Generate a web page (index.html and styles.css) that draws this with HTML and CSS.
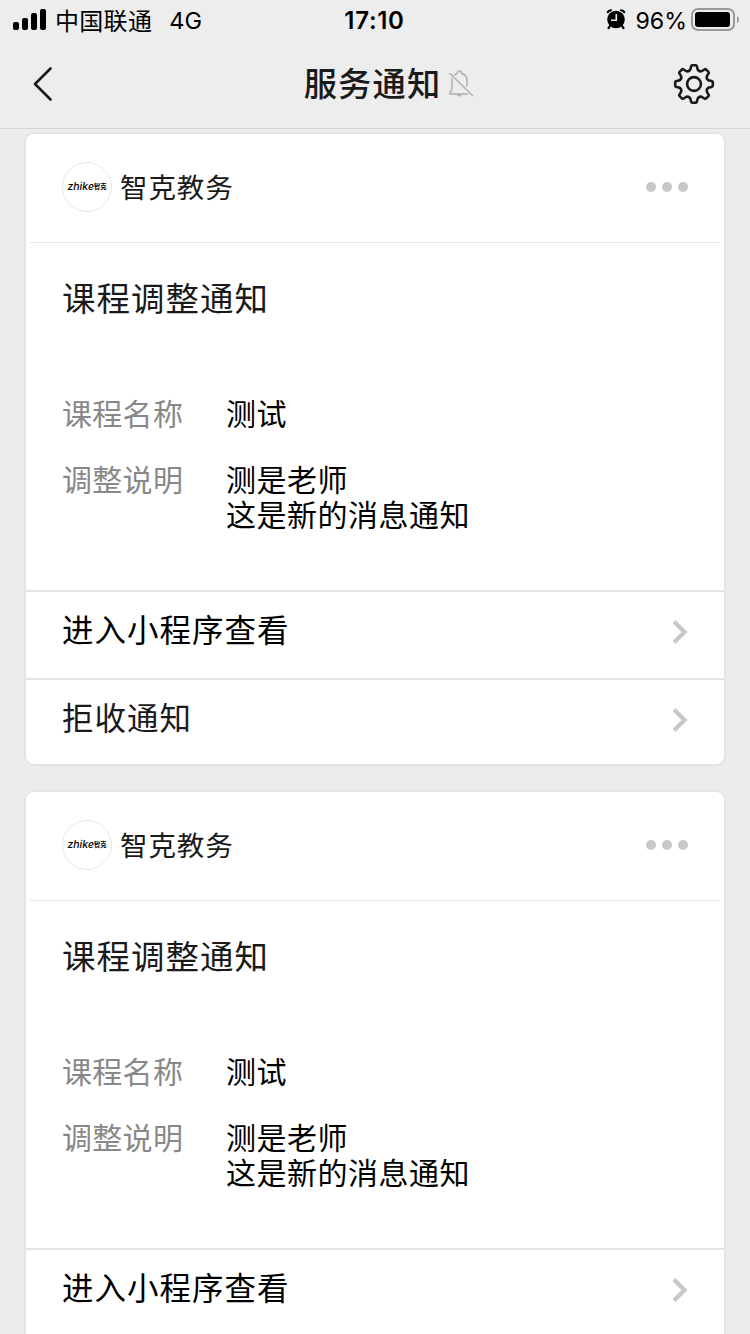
FILE: index.html
```
<!DOCTYPE html>
<html lang="zh-CN">
<head>
    <meta charset="UTF-8">
    <meta name="viewport" content="width=device-width, initial-scale=1.0">
    <title>服务通知</title>
    <link rel="stylesheet" href="styles.css">
</head>
<body>
    <!-- Icônes communes -->
    <svg class="defs" width="0" height="0">
        <defs>
            <path id="tooth" d="M-5.4 -13Q-3.7 -13.6 -3.4 -15.3L-2.9 -17.6Q-2.7 -18.8 -1.6 -18.8H1.6Q2.7 -18.8 2.9 -17.6L3.4 -15.3Q3.7 -13.6 5.4 -13"/>
            <path id="arrow" d="M2 2.5L12.5 13L2 23.5"/>
        </defs>
    </svg>

    <header class="top">
        <div class="status">
            <div class="status-left">
                <svg class="signal" width="34" height="22" viewBox="0 0 34 22">
                    <rect x="0" y="13" width="6" height="8" rx="2"/>
                    <rect x="9" y="9" width="6" height="12" rx="2"/>
                    <rect x="18" y="4" width="6" height="17" rx="2"/>
                    <rect x="27" y="0" width="6" height="21" rx="2"/>
                </svg>
                <span class="carrier">中国联通</span>
                <span class="network">4G</span>
            </div>
            <div class="time">17:10</div>
            <div class="status-right">
                <svg class="alarm" width="20" height="21" viewBox="0 0 20 21">
                    <circle cx="10" cy="10.500" r="8.800"/>
                    <path class="alarm-line" d="M1.800 3.200Q2.500 1.200 5 1.300M18.200 3.200Q17.500 1.200 15 1.300M4 17L2.500 19.200M16 17L17.500 19.200"/>
                    <path class="alarm-hand" d="M10.300 5V11.300H5"/>
                </svg>
                <span class="percent">96%</span>
                <svg class="battery" width="48" height="24" viewBox="0 0 48 24">
                    <rect class="battery-case" x="1" y="1" width="42" height="21" rx="6"/>
                    <rect x="4" y="4" width="35" height="15" rx="3"/>
                    <path class="battery-cap" d="M46 8Q48 9 48 11.5T46 15Z"/>
                </svg>
            </div>
        </div>
        <div class="nav">
            <svg class="back" width="20" height="36" viewBox="0 0 20 36">
                <path d="M17.5 2.5L2 18L17.5 33.5"/>
            </svg>
            <div class="nav-title">
                <h1>服务通知</h1>
                <svg class="mute" width="26" height="28" viewBox="0 0 26 28">
                    <path d="M4 8.500V17.500Q4 20.500 1.800 22.500V24H19.500M9.500 24.500Q11.500 27 13 24.500M6.500 5Q7.500 4 9.300 3.500Q9.500 1 11.500 1T13.700 3.500Q19 5 19 10.500V16M2 3.500L24.500 25.500"/>
                </svg>
            </div>
            <svg class="gear" width="42" height="42" viewBox="-21 -21 42 42">
                <use href="#tooth"/>
                <use href="#tooth" transform="rotate(45)"/>
                <use href="#tooth" transform="rotate(90)"/>
                <use href="#tooth" transform="rotate(135)"/>
                <use href="#tooth" transform="rotate(180)"/>
                <use href="#tooth" transform="rotate(225)"/>
                <use href="#tooth" transform="rotate(270)"/>
                <use href="#tooth" transform="rotate(315)"/>
                <circle r="6.900"/>
            </svg>
        </div>
    </header>

    <main class="list">
        <section class="card">
            <div class="card-head">
                <div class="avatar"><span>zhike</span><b>智克</b></div>
                <div class="name">智克教务</div>
                <div class="dots"><i></i><i></i><i></i></div>
            </div>
            <div class="card-body">
                <h2>课程调整通知</h2>
                <dl class="fields">
                    <dt>课程名称</dt>
                    <dd>测试</dd>
                    <dt>调整说明</dt>
                    <dd>测是老师<br>这是新的消息通知</dd>
                </dl>
            </div>
            <div class="row enter">
                <span>进入小程序查看</span>
                <svg class="arrow" width="17" height="26"><use href="#arrow"/></svg>
            </div>
            <div class="row">
                <span>拒收通知</span>
                <svg class="arrow" width="17" height="26"><use href="#arrow"/></svg>
            </div>
        </section>

        <section class="card card-cut">
            <div class="card-head">
                <div class="avatar"><span>zhike</span><b>智克</b></div>
                <div class="name">智克教务</div>
                <div class="dots"><i></i><i></i><i></i></div>
            </div>
            <div class="card-body">
                <h2>课程调整通知</h2>
                <dl class="fields">
                    <dt>课程名称</dt>
                    <dd>测试</dd>
                    <dt>调整说明</dt>
                    <dd>测是老师<br>这是新的消息通知</dd>
                </dl>
            </div>
            <div class="row enter">
                <span>进入小程序查看</span>
                <svg class="arrow" width="17" height="26"><use href="#arrow"/></svg>
            </div>
        </section>
    </main>
</body>
</html>
```

FILE: styles.css
```
* {
    box-sizing: border-box;
}

body {
    margin: 0;
    height: 1334px;
    overflow: hidden;
    display: flex;
    flex-direction: column;
    background-color: #ececec;
    color: #1a1a1a;
    font-family: Inter, "Noto Sans CJK SC", sans-serif;
}

svg {
    display: block;
    flex: none;
}

.defs {
    display: none;
}

h1, h2, dl, dd {
    margin: 0;
}

/* Barre du haut */
.top {
    flex: none;
    height: 129px;
    background-color: #ededed;
    border-bottom: 1px solid #d5d5d5;
}

.status {
    display: grid;
    grid-template-columns: 1fr auto 1fr;
    align-items: center;
    height: 40px;
    padding: 0 11px 0 13px;
    color: #000;
    font-size: 24px;
    line-height: 38px;
}

.status-left, .status-right {
    display: flex;
    align-items: center;
}

.status-right {
    justify-content: flex-end;
}

.signal {
    margin-right: 8px;
}

.carrier {
    font-family: "Noto Sans CJK SC", sans-serif;
    letter-spacing: 0.3px;
}

.network {
    margin-left: 17px;
    padding-top: 2px;
    font-size: 23.5px;
}

.time {
    margin-left: -3px;
    padding-top: 2px;
    font-weight: 600;
    letter-spacing: 0.7px;
}

.alarm {
    margin: 0 9px 2px 0;
}

.alarm-line {
    fill: none;
    stroke: #000;
    stroke-width: 2.2;
    stroke-linecap: round;
}

.alarm-hand {
    fill: none;
    stroke: #ededed;
    stroke-width: 1.6;
}

.percent {
    margin-right: 4px;
    padding-top: 2px;
    font-size: 23.2px;
}

.battery-case {
    fill: none;
    stroke: #9a9a9a;
    stroke-width: 2;
}

.battery-cap {
    fill: #9a9a9a;
}

.nav {
    display: grid;
    grid-template-columns: 60px 1fr 60px;
    align-items: center;
    height: 88px;
    padding: 0 35px 0 33px;
}

.back, .gear, .mute {
    fill: none;
    stroke: #1a1a1a;
    stroke-width: 2.6;
    stroke-linecap: round;
    stroke-linejoin: round;
}

.gear {
    justify-self: end;
}

.nav-title {
    display: flex;
    justify-content: center;
    align-items: center;
    padding: 0 0 0 30px;
}

.nav-title h1 {
    font-size: 33.3px;
    font-weight: 500;
    line-height: 48px;
    letter-spacing: 1.1px;
}

.mute {
    margin-left: 7px;
    stroke: #b0b0b0;
    stroke-width: 1.5;
}

/* Liste des notifications */
.list {
    flex: 1;
    min-height: 0;
    display: flex;
    flex-direction: column;
    gap: 24px;
    padding: 3px 24px 0;
}

.card {
    flex: none;
    height: 634px;
    background-color: #fff;
    border: 2px solid #e4e4e4;
    border-radius: 10px;
}

/* Carte coupée par le bas de l'écran */
.card-cut {
    height: 544px;
    border-bottom: 0;
    border-radius: 10px 10px 0 0;
}

.card-head {
    display: flex;
    align-items: center;
    height: 109px;
    margin: 0 4px;
    padding: 0 32px 2px;
    border-bottom: 1px solid #e5e5e5;
}

.avatar {
    display: flex;
    justify-content: center;
    align-items: center;
    width: 50px;
    height: 50px;
    margin-right: 8px;
    border: 1px solid #e8e8e8;
    border-radius: 50%;
    color: #000;
    font-size: 10.5px;
    font-style: italic;
    font-weight: 500;
    line-height: 12px;
}

.avatar b {
    font-size: 6.3px;
    font-style: normal;
}

.name {
    flex: 1;
    padding-top: 1px;
    font-size: 27.5px;
    line-height: 40px;
    letter-spacing: 0.9px;
}

.dots {
    display: flex;
    gap: 6px;
}

.dots i {
    width: 10px;
    height: 10px;
    border-radius: 50%;
    background-color: #c7c7cc;
}

.card-body {
    height: 347px;
    padding: 32px 36px 0;
}

.card-body h2 {
    font-size: 33.5px;
    font-weight: 400;
    line-height: 48px;
    letter-spacing: 1px;
}

.fields {
    display: grid;
    grid-template-columns: 164px 1fr;
    row-gap: 31px;
    margin-top: 74px;
    font-size: 30px;
    line-height: 35px;
    letter-spacing: 0.5px;
}

.fields dt {
    color: #888;
    letter-spacing: 0.3px;
}

.fields dd {
    color: #000;
}

.row {
    display: flex;
    justify-content: space-between;
    align-items: center;
    height: 86px;
    padding: 0 35px 5px 36px;
    border-top: 2px solid #e4e4e4;
    font-size: 31.5px;
    line-height: 46px;
    letter-spacing: 1px;
}

.enter {
    height: 88px;
    padding-bottom: 6px;
    color: #000;
}

.row span {
    margin-top: -2px;
}

.arrow {
    fill: none;
    stroke: #c7c7cc;
    stroke-width: 4.4;
}
```
